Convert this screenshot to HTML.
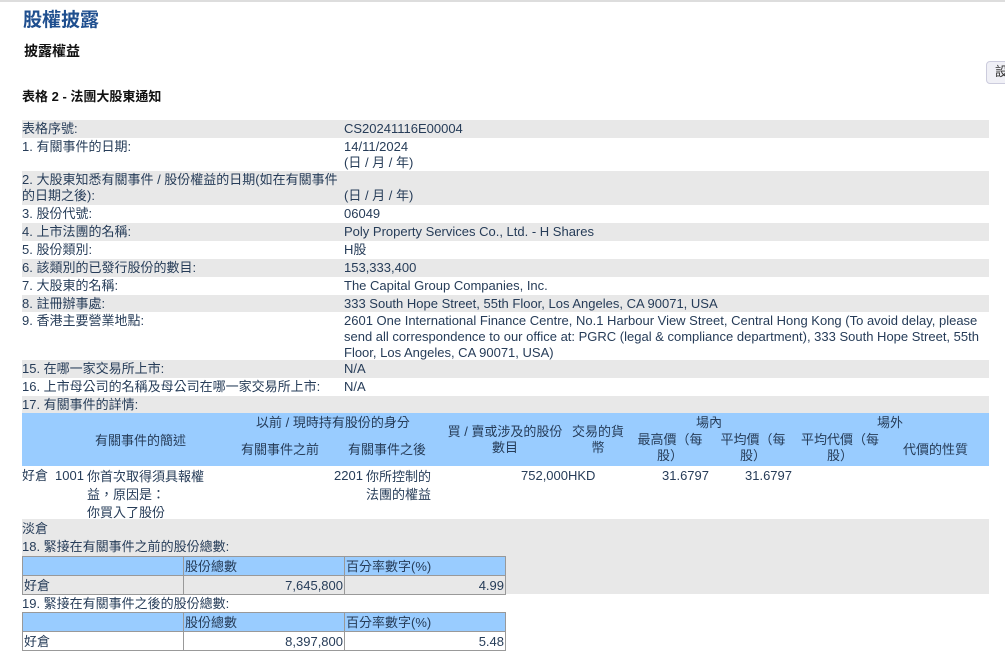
<!DOCTYPE html>
<html><head><meta charset="utf-8"><style>
*{margin:0;padding:0;box-sizing:border-box}
body{width:1005px;height:652px;background:#fff;position:relative;overflow:hidden;font-family:"Liberation Sans","Noto Sans CJK TC",sans-serif;font-size:13px;color:#263c58}
.a{position:absolute;white-space:nowrap;line-height:16px}
.g{position:absolute;left:22px;width:967px;background:#e8e8e8}
.b{position:absolute;background:#99ccff}
.c{text-align:center}
.r{text-align:right}
table{position:absolute;border-collapse:collapse;font-size:13px;color:#263c58}
td{border:1px solid #999;height:19px;padding:0 1px;line-height:17px}
</style></head><body>
<div style="position:absolute;left:0;top:0;width:1005px;height:2px;background:#ddd"></div>
<div class="a" style="left:23px;top:9px;font-size:19px;line-height:24px;color:#1f4f8f;font-weight:bold">股權披露</div>
<div class="a" style="left:24px;top:43px;font-size:14px;color:#111;font-weight:bold">披露權益</div>
<div style="position:absolute;left:986px;top:61px;width:30px;height:23px;border:1px solid #ccd;border-radius:4px;background:#f0f0f6"></div>
<div class="a" style="left:995px;top:64px;color:#333">設</div>
<div class="a" style="left:22px;top:89px;color:#111;font-weight:bold">表格 2 - 法團大股東通知</div>

<div class="g" style="top:120px;height:18px"></div>
<div class="g" style="top:171px;height:34px"></div>
<div class="g" style="top:223px;height:18px"></div>
<div class="g" style="top:259px;height:18px"></div>
<div class="g" style="top:295px;height:17px"></div>
<div class="g" style="top:360px;height:18px"></div>
<div class="g" style="top:396px;height:17px"></div>
<div class="g" style="top:519px;height:75px"></div>
<div class="g" style="top:594px;height:18px;background:#fff"></div>

<div class="a" style="left:22px;top:121px">表格序號:</div><div class="a" style="left:344px;top:121px">CS20241116E00004</div>
<div class="a" style="left:22px;top:139px">1. 有關事件的日期:</div><div class="a" style="left:344px;top:139px">14/11/2024<br>(日 / 月 / 年)</div>
<div class="a" style="left:22px;top:172px">2. 大股東知悉有關事件 / 股份權益的日期(如在有關事件<br>的日期之後):</div><div class="a" style="left:344px;top:188px">(日 / 月 / 年)</div>
<div class="a" style="left:22px;top:206px">3. 股份代號:</div><div class="a" style="left:344px;top:206px">06049</div>
<div class="a" style="left:22px;top:224px">4. 上市法團的名稱:</div><div class="a" style="left:344px;top:224px">Poly Property Services Co., Ltd. - H Shares</div>
<div class="a" style="left:22px;top:242px">5. 股份類別:</div><div class="a" style="left:344px;top:242px">H股</div>
<div class="a" style="left:22px;top:260px">6. 該類別的已發行股份的數目:</div><div class="a" style="left:344px;top:260px">153,333,400</div>
<div class="a" style="left:22px;top:278px">7. 大股東的名稱:</div><div class="a" style="left:344px;top:278px">The Capital Group Companies, Inc.</div>
<div class="a" style="left:22px;top:296px">8. 註冊辦事處:</div><div class="a" style="left:344px;top:296px">333 South Hope Street, 55th Floor, Los Angeles, CA 90071, USA</div>
<div class="a" style="left:22px;top:313px">9. 香港主要營業地點:</div><div class="a" style="left:344px;top:313px">2601 One International Finance Centre, No.1 Harbour View Street, Central Hong Kong (To avoid delay, please<br>send all correspondence to our office at: PGRC (legal &amp; compliance department), 333 South Hope Street, 55th<br>Floor, Los Angeles, CA 90071, USA)</div>
<div class="a" style="left:22px;top:361px">15. 在哪一家交易所上市:</div><div class="a" style="left:344px;top:361px">N/A</div>
<div class="a" style="left:22px;top:379px">16. 上市母公司的名稱及母公司在哪一家交易所上市:</div><div class="a" style="left:344px;top:379px">N/A</div>
<div class="a" style="left:22px;top:397px">17. 有關事件的詳情:</div>

<div class="b" style="left:22px;top:413px;width:967px;height:53px"></div>
<div class="a" style="left:95px;top:433px">有關事件的簡述</div>
<div class="a" style="left:256px;top:415px">以前 / 現時持有股份的身分</div>
<div class="a" style="left:241px;top:442px">有關事件之前</div>
<div class="a" style="left:348px;top:442px">有關事件之後</div>
<div class="a c" style="left:440px;top:424px;width:130px">買 / 賣或涉及的股份<br>數目</div>
<div class="a c" style="left:567px;top:424px;width:62px">交易的貨<br>幣</div>
<div class="a" style="left:696px;top:415px">場內</div>
<div class="a c" style="left:630px;top:432px;width:80px">最高價（每<br>股）</div>
<div class="a c" style="left:713px;top:432px;width:80px">平均價（每<br>股）</div>
<div class="a" style="left:877px;top:415px">場外</div>
<div class="a c" style="left:795px;top:432px;width:90px">平均代價（每<br>股）</div>
<div class="a" style="left:903px;top:442px">代價的性質</div>

<div class="a" style="left:22px;top:468px">好倉</div>
<div class="a" style="left:55px;top:468px">1001</div>
<div class="a" style="left:87px;top:468px;line-height:18px">你首次取得須具報權<br>益，原因是：<br>你買入了股份</div>
<div class="a" style="left:334px;top:468px">2201</div>
<div class="a" style="left:366px;top:468px;line-height:18px">你所控制的<br>法團的權益</div>
<div class="a" style="left:521px;top:468px">752,000HKD</div>
<div class="a" style="left:662px;top:468px">31.6797</div>
<div class="a" style="left:745px;top:468px">31.6797</div>

<div class="a" style="left:22px;top:521px">淡倉</div>
<div class="a" style="left:22px;top:539px">18. 緊接在有關事件之前的股份總數:</div>
<table style="left:22px;top:556px;width:484px">
<tr style="background:#99ccff"><td style="width:161px"></td><td style="width:161px">股份總數</td><td>百分率數字(%)</td></tr>
<tr style="background:#e8e8e8"><td>好倉</td><td class="r">7,645,800</td><td class="r">4.99</td></tr>
</table>
<div class="a" style="left:22px;top:596px">19. 緊接在有關事件之後的股份總數:</div>
<table style="left:22px;top:612px;width:484px">
<tr style="background:#99ccff"><td style="width:161px"></td><td style="width:161px">股份總數</td><td>百分率數字(%)</td></tr>
<tr><td>好倉</td><td class="r">8,397,800</td><td class="r">5.48</td></tr>
</table>
</body></html>
